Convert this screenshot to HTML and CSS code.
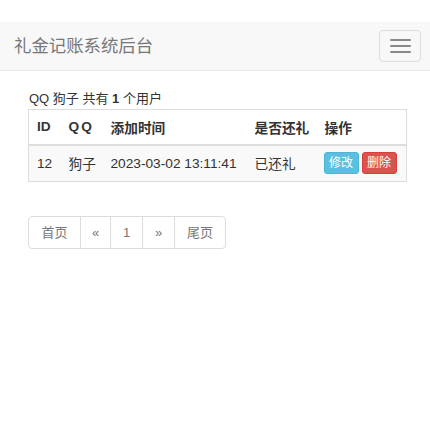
FILE: index.html
```html
<!DOCTYPE html>
<html lang="zh-CN">
<head>
<meta charset="utf-8">
<title>礼金记账系统后台</title>
<link rel="stylesheet" href="styles.css">
</head>
<body>
<div class="spacer"></div>
<nav class="navbar">
  <span class="brand">礼金记账系统后台</span>
  <button class="toggle" type="button" aria-label="menu">
    <span class="bar"></span><span class="bar"></span><span class="bar"></span>
  </button>
</nav>
<main class="container">
  <p class="summary">QQ 狗子 共有 <b>1</b> 个用户</p>
  <table class="table">
    <thead>
      <tr>
        <th class="c-id">ID</th>
        <th class="c-qq"><span class="qq-head">QQ</span></th>
        <th class="c-time">添加时间</th>
        <th class="c-back">是否还礼</th>
        <th class="c-op">操作</th>
      </tr>
    </thead>
    <tbody>
      <tr>
        <td>12</td>
        <td>狗子</td>
        <td>2023-03-02 13:11:41</td>
        <td>已还礼</td>
        <td><span class="ops"><a class="btn btn-info">修改</a><a class="btn btn-danger">删除</a></span></td>
      </tr>
    </tbody>
  </table>
  <ul class="pagination">
    <li class="w-first">首页</li>
    <li class="w-arrow">«</li>
    <li class="w-num">1</li>
    <li class="w-num">»</li>
    <li class="w-last">尾页</li>
  </ul>
</main>
</body>
</html>
```
FILE: styles.css
```css
* { box-sizing: border-box; }
html, body { margin: 0; padding: 0; background: #fff; }
body {
  font-family: "Liberation Sans", "Noto Sans CJK SC", sans-serif;
  font-size: 13px;
  color: #333;
  width: 430px;
}
.spacer { height: 22px; }
.navbar {
  height: 49px;
  background: #f8f8f8;
  border-bottom: 1px solid #e7e7e7;
  display: flex;
  align-items: center;
  justify-content: space-between;
  padding: 0 9px 0 14px;
}
.brand {
  font-size: 17.4px;
  color: #777;
  line-height: 20px;
}
.toggle {
  width: 42px;
  height: 32px;
  border: 1px solid #ddd;
  border-radius: 4px;
  background: transparent;
  display: flex;
  flex-direction: column;
  align-items: center;
  justify-content: center;
  gap: 4px;
  padding: 0;
}
.bar {
  display: block;
  width: 21px;
  height: 2px;
  border-radius: 1px;
  background: #888;
}
.container {
  padding: 0 23px 0 28px;
}
.summary {
  margin: 0;
  padding-top: 21px;
  height: 38px;
  line-height: 14px;
  font-size: 13px;
  padding-left: 1px;
}
.summary b { font-weight: bold; }
.table {
  width: 379px;
  border-collapse: collapse;
  border: 1px solid #ddd;
}
.table th, .table td {
  text-align: left;
  padding: 0 0 0 8px;
  white-space: nowrap;
}
.table th {
  height: 35px;
  font-weight: bold;
  border-bottom: 2px solid #ddd;
  font-size: 13.7px;
}
.table td {
  height: 37px;
  background: #f9f9f9;
  border-bottom: 1px solid #ddd;
  font-size: 13.7px;
}
.qq-head { letter-spacing: 2px; }
.c-id { width: 32px; }
.c-qq { width: 42px; }
.c-time { width: 144px; }
.c-back { width: 70px; }
.table td:last-child { padding-left: 7px; }
.ops { display: flex; gap: 3px; }
.btn {
  display: inline-block;
  width: 35px;
  height: 22px;
  text-align: center;
  font-size: 12px;
  color: #fff;
  border-radius: 3px;
  line-height: 20px;
}
.btn-info { background: #5bc0de; border: 1px solid #46b8da; }
.btn-danger { background: #d9534f; border: 1px solid #d43f3a; }
.pagination {
  list-style: none;
  margin: 34px 0 0 0;
  padding: 0;
  display: flex;
}
.pagination li {
  height: 33px;
  line-height: 31px;
  text-align: center;
  border: 1px solid #ddd;
  margin-left: -1px;
  color: #777;
  font-size: 13px;
  background: #fff;
}
.pagination li:first-child { margin-left: 0; border-radius: 4px 0 0 4px; }
.pagination li:last-child { border-radius: 0 4px 4px 0; }
.w-first { width: 53px; }
.w-arrow { width: 31px; color: #999; }
.w-num { width: 33px; }
.w-last { width: 52px; }
```
